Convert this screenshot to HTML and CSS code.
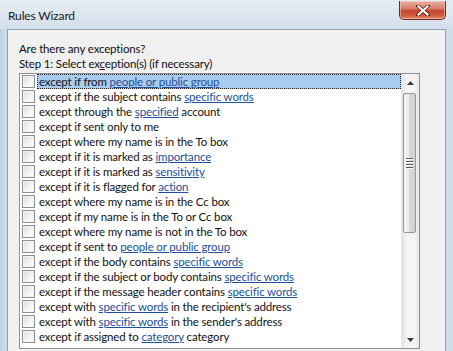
FILE: index.html
```html
<!DOCTYPE html>
<html>
<head>
<meta charset="utf-8">
<link rel="stylesheet" href="styles.css">
</head>
<body>
<div class="window">
  <div class="titlebar">
    <span class="title">Rules Wizard</span>
    <div class="close">
      <svg width="14" height="11" viewBox="0 0 14 11"><path d="M2 1 L12 10 M12 1 L2 10" stroke="#5a1a10" stroke-width="3.6" stroke-linecap="square"/><path d="M2.5 1.5 L11.5 9.5 M11.5 1.5 L2.5 9.5" stroke="#fff" stroke-width="2.2" stroke-linecap="square"/></svg>
    </div>
  </div>
  <div class="client">
    <div class="line">Are there any exceptions?</div>
    <div class="line">Step 1: Select ex<u>c</u>eption(s) (if necessary)</div>
    <div class="listbox">
      <div class="items">
        <div class="row"><span class="cb"></span><span class="lbl sel">except if from <a>people or public group</a></span></div>
        <div class="row"><span class="cb"></span><span class="lbl">except if the subject contains <a>specific words</a></span></div>
        <div class="row"><span class="cb"></span><span class="lbl">except through the <a>specified</a> account</span></div>
        <div class="row"><span class="cb"></span><span class="lbl">except if sent only to me</span></div>
        <div class="row"><span class="cb"></span><span class="lbl">except where my name is in the To box</span></div>
        <div class="row"><span class="cb"></span><span class="lbl">except if it is marked as <a>importance</a></span></div>
        <div class="row"><span class="cb"></span><span class="lbl">except if it is marked as <a>sensitivity</a></span></div>
        <div class="row"><span class="cb"></span><span class="lbl">except if it is flagged for <a>action</a></span></div>
        <div class="row"><span class="cb"></span><span class="lbl">except where my name is in the Cc box</span></div>
        <div class="row"><span class="cb"></span><span class="lbl">except if my name is in the To or Cc box</span></div>
        <div class="row"><span class="cb"></span><span class="lbl">except where my name is not in the To box</span></div>
        <div class="row"><span class="cb"></span><span class="lbl">except if sent to <a>people or public group</a></span></div>
        <div class="row"><span class="cb"></span><span class="lbl">except if the body contains <a>specific words</a></span></div>
        <div class="row"><span class="cb"></span><span class="lbl">except if the subject or body contains <a>specific words</a></span></div>
        <div class="row"><span class="cb"></span><span class="lbl">except if the message header contains <a>specific words</a></span></div>
        <div class="row"><span class="cb"></span><span class="lbl">except with <a>specific words</a> in the recipient's address</span></div>
        <div class="row"><span class="cb"></span><span class="lbl">except with <a>specific words</a> in the sender's address</span></div>
        <div class="row"><span class="cb"></span><span class="lbl">except if assigned to <a>category</a> category</span></div>
      </div>
      <div class="scrollbar">
        <div class="arrow"><svg width="7" height="4" viewBox="0 0 7 4"><path d="M0 4 L3.5 0 L7 4 Z" fill="#3c3c3c"/></svg></div>
        <div class="track">
          <div class="thumb">
            <div class="grip"><i></i><i></i><i></i><i></i></div>
          </div>
        </div>
        <div class="arrow"><svg width="7" height="4" viewBox="0 0 7 4"><path d="M0 0 L7 0 L3.5 4 Z" fill="#3c3c3c"/></svg></div>
      </div>
    </div>
  </div>
</div>
</body>
</html>
```

FILE: styles.css
```css
html, body {
  margin: 0;
  padding: 0;
}
body {
  width: 453px;
  height: 351px;
  overflow: hidden;
  font-family: Lato, "Noto Sans", sans-serif;
  font-size: 11.5px;
  letter-spacing: -0.15px;
  color: #111;
}
.window {
  width: 453px;
  height: 351px;
  display: flex;
  flex-direction: column;
  background: linear-gradient(90deg, #b9cde2 0, #cddced 4px, #d9e4f0 50%, #cfdcea 100%);
}
.titlebar {
  height: 29px;
  display: flex;
  align-items: flex-start;
  justify-content: space-between;
  background: linear-gradient(180deg, #e6edf5 0, #dbe5ef 60%, #d3dfeb 100%);
}
.title {
  margin: 8px 0 0 8px;
  line-height: 15px;
  font-size: 12px;
  color: #1a1a1a;
}
.close {
  width: 45px;
  height: 18px;
  margin: 1px 7px 0 0;
  border: 1px solid #6e2a20;
  border-top: none;
  border-radius: 0 0 5px 5px;
  background: linear-gradient(180deg, #eab0a4 0, #d9826f 40%, #c6452c 55%, #cf5b3e 80%, #e08a6a 100%);
  display: flex;
  align-items: center;
  justify-content: center;
  box-shadow: inset 0 0 0 1px rgba(255,220,210,0.5);
}
.client {
  flex: 1;
  margin: 0 7px;
  border: 1px solid #8ea0b4;
  border-bottom: none;
  background: #f0f0f0;
  padding: 11px 0 0 11px;
}
.line {
  line-height: 15px;
  height: 15px;
}
.listbox {
  margin-top: 2px;
  width: 399px;
  height: 274px;
  border: 1px solid #8c8f94;
  background: #fff;
  display: flex;
  overflow: hidden;
}
.items {
  flex: 1;
  display: flex;
  flex-direction: column;
}
.row {
  height: 15px;
  display: flex;
  align-items: center;
  padding-left: 2px;
}
.cb {
  width: 11px;
  height: 11px;
  border: 1px solid #8e8f8f;
  background: linear-gradient(135deg, #dcdcdc 0, #f6f6f6 60%, #fff 100%);
  box-shadow: inset 0 0 0 1px #f4f4f4;
  flex: none;
}
.lbl {
  margin-left: 2px;
  padding: 0 2px;
  height: 15px;
  line-height: 15px;
  white-space: nowrap;
  box-sizing: border-box;
}
.lbl.sel {
  flex: 1;
  background: #a9cbef;
  outline: 1px dotted #222;
  outline-offset: -1px;
  padding-left: 2px;
}
a {
  color: #22509b;
  text-decoration: underline;
}
.scrollbar {
  width: 17px;
  flex: none;
  display: flex;
  flex-direction: column;
  background: linear-gradient(90deg, #e3e3e3 0, #f5f5f5 30%, #f5f5f5 70%, #e8e8e8 100%);
  border-left: 1px solid #e6e6e6;
}
.arrow {
  height: 17px;
  display: flex;
  align-items: center;
  justify-content: center;
}
.track {
  flex: 1;
  padding-top: 2px;
}
.thumb {
  width: 13px;
  height: 140px;
  margin-left: 1px;
  border: 1px solid #979797;
  border-radius: 2px;
  box-sizing: border-box;
  background: linear-gradient(90deg, #f4f4f4 0, #ebebeb 45%, #d9d9d9 50%, #cfcfcf 100%);
  display: flex;
  align-items: center;
  justify-content: center;
}
.grip {
  display: flex;
  flex-direction: column;
  gap: 1px;
}
.grip i {
  display: block;
  width: 7px;
  height: 1px;
  background: #5a5a5a;
  border-bottom: 1px solid #fff;
}
```
